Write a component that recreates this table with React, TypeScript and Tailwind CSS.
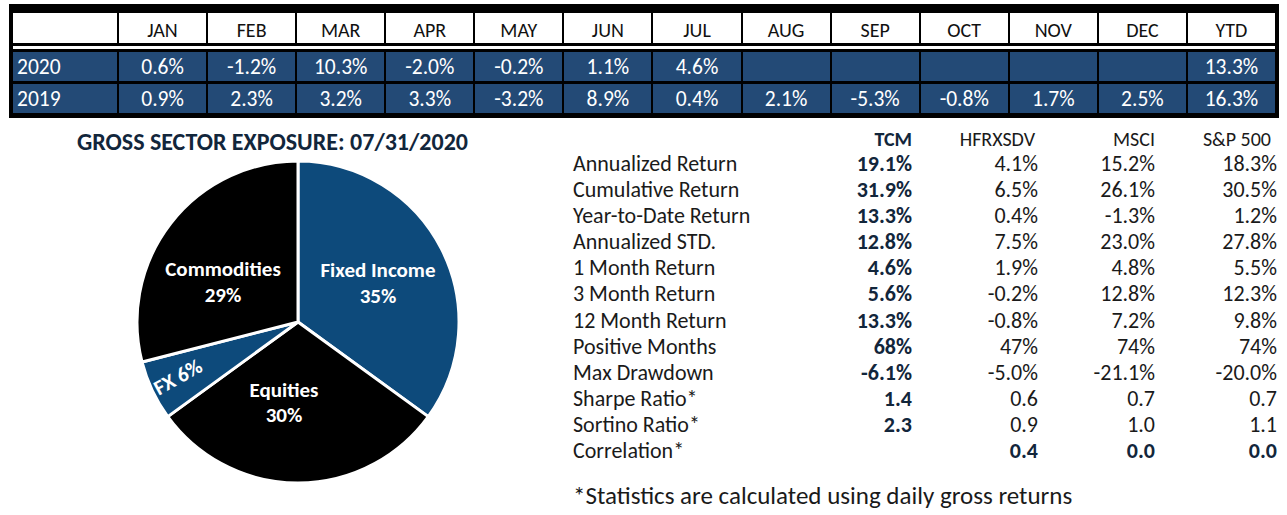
const months = ["JAN", "FEB", "MAR", "APR", "MAY", "JUN", "JUL", "AUG", "SEP", "OCT", "NOV", "DEC", "YTD"];

const years = [
  { year: "2020", values: ["0.6%", "-1.2%", "10.3%", "-2.0%", "-0.2%", "1.1%", "4.6%", "", "", "", "", "", "13.3%"] },
  { year: "2019", values: ["0.9%", "2.3%", "3.2%", "3.3%", "-3.2%", "8.9%", "0.4%", "2.1%", "-5.3%", "-0.8%", "1.7%", "2.5%", "16.3%"] },
];

interface Stat {
  label: string;
  tcm: string;
  hfrx: string;
  msci: string;
  spx: string;
  boldAll?: boolean;
}

const stats: Stat[] = [
  { label: "Annualized Return", tcm: "19.1%", hfrx: "4.1%", msci: "15.2%", spx: "18.3%" },
  { label: "Cumulative Return", tcm: "31.9%", hfrx: "6.5%", msci: "26.1%", spx: "30.5%" },
  { label: "Year-to-Date Return", tcm: "13.3%", hfrx: "0.4%", msci: "-1.3%", spx: "1.2%" },
  { label: "Annualized STD.", tcm: "12.8%", hfrx: "7.5%", msci: "23.0%", spx: "27.8%" },
  { label: "1 Month Return", tcm: "4.6%", hfrx: "1.9%", msci: "4.8%", spx: "5.5%" },
  { label: "3 Month Return", tcm: "5.6%", hfrx: "-0.2%", msci: "12.8%", spx: "12.3%" },
  { label: "12 Month Return", tcm: "13.3%", hfrx: "-0.8%", msci: "7.2%", spx: "9.8%" },
  { label: "Positive Months", tcm: "68%", hfrx: "47%", msci: "74%", spx: "74%" },
  { label: "Max Drawdown", tcm: "-6.1%", hfrx: "-5.0%", msci: "-21.1%", spx: "-20.0%" },
  { label: "Sharpe Ratio*", tcm: "1.4", hfrx: "0.6", msci: "0.7", spx: "0.7" },
  { label: "Sortino Ratio*", tcm: "2.3", hfrx: "0.9", msci: "1.0", spx: "1.1" },
  { label: "Correlation*", tcm: "", hfrx: "0.4", msci: "0.0", spx: "0.0", boldAll: true },
];

const slices = [
  { name: "Fixed Income", pct: 35, color: "#0d4a7b" },
  { name: "Equities", pct: 30, color: "#000000" },
  { name: "FX", pct: 6, color: "#0d4a7b" },
  { name: "Commodities", pct: 29, color: "#000000" },
];

const CX = 298;
const CY = 167;
const R = 161;

const point = (deg: number) => {
  const rad = ((deg - 90) * Math.PI) / 180;
  return [CX + R * Math.cos(rad), CY + R * Math.sin(rad)];
};

const Pie = () => {
  let start = 0;
  const paths = slices.map((s) => {
    const sweep = (s.pct / 100) * 360;
    const [x1, y1] = point(start);
    const [x2, y2] = point(start + sweep);
    const large = sweep > 180 ? 1 : 0;
    const d = `M${CX} ${CY} L${x1} ${y1} A${R} ${R} 0 ${large} 1 ${x2} ${y2} Z`;
    start += sweep;
    return <path key={s.name} d={d} fill={s.color} stroke="#ffffff" strokeWidth={3} strokeLinejoin="round" />;
  });

  return (
    <svg width="545" height="340" viewBox="0 0 545 340" className="block">
      {paths}
      <g fill="#ffffff" fontWeight="700" fontSize="21" textAnchor="middle">
        <text x="378" y="122">Fixed Income</text>
        <text x="378" y="148">35%</text>
        <text x="223" y="121">Commodities</text>
        <text x="223" y="147">29%</text>
        <text x="284" y="242">Equities</text>
        <text x="284" y="267">30%</text>
        <text x="178" y="229" transform="rotate(-29 178 222)">FX 6%</text>
      </g>
    </svg>
  );
};

const cols = "grid grid-cols-[267px_72px_126px_117px_122px]";

export default function App() {
  return (
    <div className="w-[1287px] h-[515px] bg-white font-[Carlito,Lato,sans-serif] overflow-hidden">
      {/* monthly returns */}
      <div className="ml-[9px] mt-[4px] w-[1270px] bg-black pt-[9px] px-[4px] pb-[5px]">
        <div className="grid grid-cols-[104px_repeat(13,1fr)] gap-x-[2px]">
          <div className="h-[30px] bg-white" />
          {months.map((m) => (
            <div key={m} className="h-[30px] bg-white flex items-center justify-center text-[20px] text-[#111] pt-[3px]">
              {m}
            </div>
          ))}
        </div>
        <div className="h-[3px] bg-white my-[3px]" />
        <div className="flex flex-col gap-[3px]">
          {years.map((y) => (
            <div key={y.year} className="grid grid-cols-[104px_repeat(13,1fr)] gap-x-[2px]">
              <div className="h-[29px] bg-[#234a76] text-white text-[21.5px] flex items-center pl-[4px] pt-[1px]">{y.year}</div>
              {y.values.map((v, i) => (
                <div key={i} className="h-[29px] bg-[#234a76] text-white text-[21.5px] flex items-center justify-center pt-[1px]">
                  {v}
                </div>
              ))}
            </div>
          ))}
        </div>
      </div>

      <div className="flex">
        {/* sector exposure */}
        <div className="w-[545px] shrink-0">
          <div className="mt-[10px] h-[27px] text-center text-[24px] font-bold text-[#12263b] leading-[27px]">
            GROSS SECTOR EXPOSURE: 07/31/2020
          </div>
          <Pie />
        </div>

        {/* statistics */}
        <div className="ml-[28px] w-[704px] pt-[9px] text-[22px] text-[#1a1a1a]">
          <div className={`${cols} h-[24px] leading-[24px] text-[20px]`}>
            <div />
            <div className="text-right font-bold text-[#12263b]">TCM</div>
            <div className="text-right pr-[3px]">HFRXSDV</div>
            <div className="text-right">MSCI</div>
            <div className="text-right pr-[6px]">S&amp;P 500</div>
          </div>
          {stats.map((s) => (
            <div key={s.label} className={`${cols} h-[26.1px] leading-[26px]`}>
              <div>{s.label}</div>
              <div className="text-right font-bold text-[#12263b]">{s.tcm}</div>
              <div className={s.boldAll ? "text-right font-bold text-[#12263b]" : "text-right"}>{s.hfrx}</div>
              <div className={s.boldAll ? "text-right font-bold text-[#12263b]" : "text-right"}>{s.msci}</div>
              <div className={s.boldAll ? "text-right font-bold text-[#12263b]" : "text-right"}>{s.spx}</div>
            </div>
          ))}
          <div className="mt-[18px] leading-[28px] text-[25px]">*Statistics are calculated using daily gross returns</div>
        </div>
      </div>
    </div>
  );
}
